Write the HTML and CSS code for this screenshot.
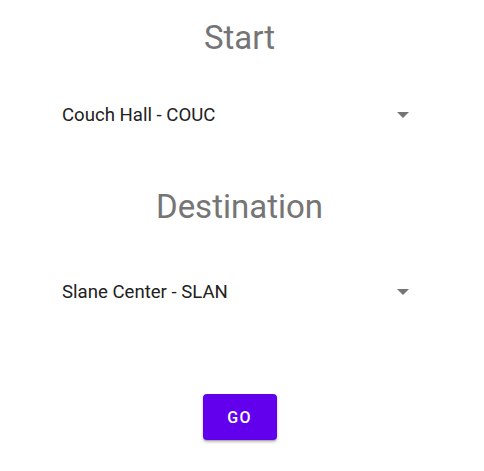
FILE: index.html
```html
<!DOCTYPE html>
<html>
<head>
<meta charset="utf-8">
<link rel="stylesheet" href="styles.css">
</head>
<body>
<div class="screen">
  <h1 class="title title-start">Start</h1>
  <div class="spinner spinner-start">
    <span class="spinner-text">Couch Hall - COUC</span>
    <svg class="arrow" width="12" height="6" viewBox="0 0 12 6"><path d="M0 0h12L6 6z" fill="#757575"/></svg>
  </div>
  <h1 class="title title-dest">Destination</h1>
  <div class="spinner spinner-dest">
    <span class="spinner-text">Slane Center - SLAN</span>
    <svg class="arrow" width="12" height="6" viewBox="0 0 12 6"><path d="M0 0h12L6 6z" fill="#757575"/></svg>
  </div>
  <div class="actions">
    <button class="go">GO</button>
  </div>
</div>
</body>
</html>
```
FILE: styles.css
```css
html, body {
  margin: 0;
  padding: 0;
  background: #ffffff;
}
.screen {
  width: 484px;
  height: 471px;
  display: flex;
  flex-direction: column;
  font-family: Roboto, "Noto Sans", sans-serif;
}
.title {
  margin: 0;
  font-weight: 400;
  font-size: 33px;
  color: #757575;
  text-align: center;
  line-height: 38px;
  width: 479px;
}
.title-start {
  margin-top: 19px;
}
.title-dest {
  margin-top: 58px;
}
.spinner {
  display: flex;
  align-items: center;
  justify-content: space-between;
  margin-left: 62px;
  width: 347px;
  height: 30px;
}
.spinner-start {
  margin-top: 43px;
}
.spinner-dest {
  margin-top: 51px;
}
.spinner-text {
  font-size: 18.6px;
  color: #212121;
}
.arrow {
  display: block;
}
.actions {
  display: flex;
  justify-content: center;
  width: 479px;
  margin-top: 87px;
}
.go {
  width: 74px;
  height: 46px;
  border: none;
  border-radius: 4px;
  background: #6200ee;
  color: #ffffff;
  font-family: Roboto, sans-serif;
  font-weight: 500;
  font-size: 16px;
  letter-spacing: 1.4px;
  box-shadow: 0 2px 3px rgba(0,0,0,0.25), 0 1px 1px rgba(0,0,0,0.15);
  padding: 0;
}
```
